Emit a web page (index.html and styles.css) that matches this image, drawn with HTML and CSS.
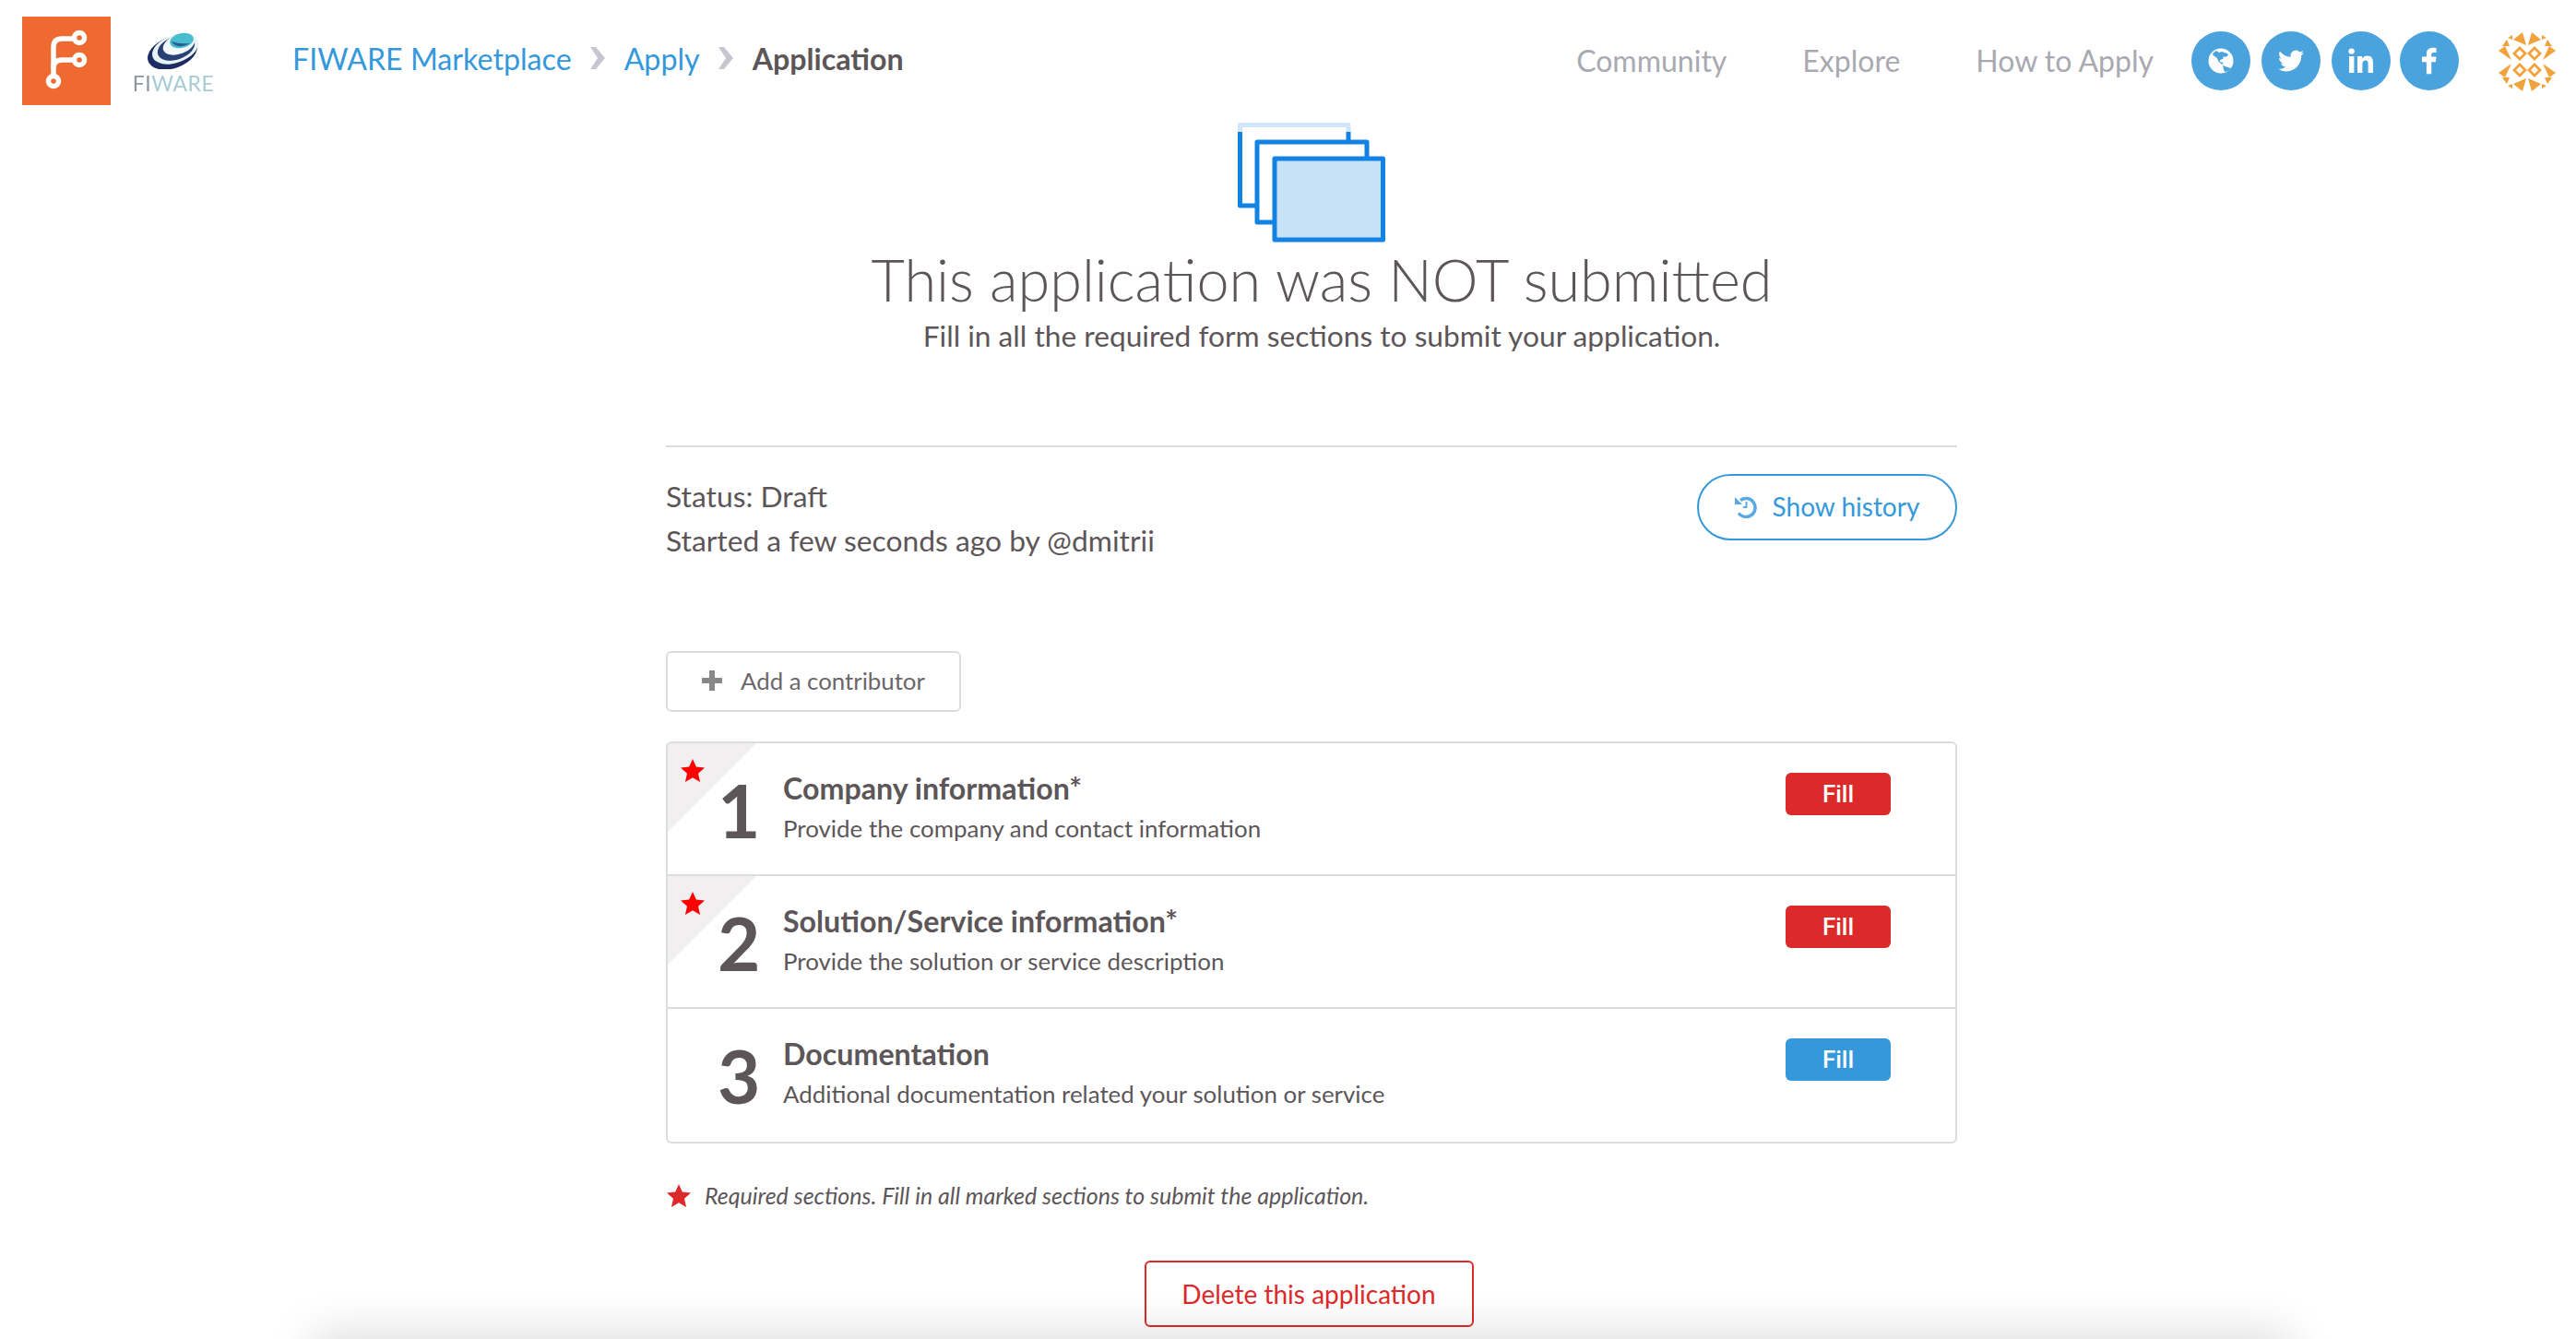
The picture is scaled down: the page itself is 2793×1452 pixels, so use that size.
FILE: index.html
```html
<!DOCTYPE html>
<html lang="en">
<head>
    <meta charset="UTF-8">
    <title>Application</title>
    <link rel="stylesheet" href="styles.css">
</head>
<body>
<header class="topbar">
    <div class="brand">
        <div class="brand-mark">
            <svg viewBox="0 0 96 96" width="96" height="96" fill="none" stroke="#fff" stroke-width="5.500">
                <path d="M34 63V33q0-9 9-9h13"/>
                <path d="M34 56q0-9 9-9h13"/>
                <circle cx="62" cy="23" r="5.500"/>
                <circle cx="62" cy="47" r="5.500"/>
                <circle cx="34" cy="70" r="5.500"/>
            </svg>
        </div>
        <div class="brand-logo">
            <svg viewBox="0 0 58 42" width="58" height="42">
                <ellipse cx="28" cy="24" rx="28" ry="17" fill="#1d2c62" transform="rotate(-20 28 24)"/>
                <ellipse cx="31" cy="20" rx="26" ry="15" fill="#e8f3f6" transform="rotate(-20 31 20)"/>
                <ellipse cx="32" cy="19" rx="21" ry="12.500" fill="#2a3f74" transform="rotate(-20 32 19)"/>
                <ellipse cx="35" cy="15" rx="18" ry="10.500" fill="#f4f9fa" transform="rotate(-20 35 15)"/>
                <ellipse cx="38" cy="11" rx="13" ry="8" fill="#49bdd0" transform="rotate(-12 38 11)"/>
                <path d="M27 12q8 3 20 2-6 4-13 3-5-1-7-5z" fill="#2a5d8f"/>
            </svg>
            <span class="brand-name">FI<i>WARE</i></span>
        </div>
    </div>
    <nav class="crumbs">
        <a href="#">FIWARE Marketplace</a>
        <svg class="crumb-sep" viewBox="0 0 16 24" width="16" height="24"><path d="M0 0h6l10 12L6 24H0l8-12z"/></svg>
        <a href="#">Apply</a>
        <svg class="crumb-sep" viewBox="0 0 16 24" width="16" height="24"><path d="M0 0h6l10 12L6 24H0l8-12z"/></svg>
        <span class="crumb-current">Application</span>
    </nav>
    <nav class="menu">
        <a href="#">Community</a>
        <a href="#">Explore</a>
        <a href="#">How to Apply</a>
    </nav>
    <div class="socials">
        <a class="social" href="#">
            <svg viewBox="0 0 28 28" width="28" height="28">
                <circle cx="14" cy="14" r="13.500" fill="#fff"/>
                <path d="M5 6l4-3 3 2 3-1 3 1 3 1 1 2-3 2-2-1-1 3-3 1 0 2 3 1 1 2-3-1-3-3-1-3-3-2-2-2z" fill="#4ba3de"/>
                <path d="M16 19l3 1 2 1 4 1-3 3-4 1-1-3z" fill="#4ba3de"/>
            </svg>
        </a>
        <a class="social" href="#">
            <svg viewBox="0 0 24 24" width="28" height="28" fill="#fff"><path d="M23.953 4.57a10 10 0 01-2.825.775 4.958 4.958 0 002.163-2.723c-.951.555-2.005.959-3.127 1.184a4.92 4.92 0 00-8.384 4.482C7.69 8.095 4.067 6.13 1.64 3.162a4.822 4.822 0 00-.666 2.475c0 1.71.87 3.213 2.188 4.096a4.904 4.904 0 01-2.228-.616v.06a4.923 4.923 0 003.946 4.827 4.996 4.996 0 01-2.212.085 4.936 4.936 0 004.604 3.417 9.867 9.867 0 01-6.102 2.105c-.39 0-.779-.023-1.17-.067a13.995 13.995 0 007.557 2.209c9.053 0 13.998-7.496 13.998-13.985 0-.21 0-.42-.015-.63A9.935 9.935 0 0024 4.59z"/></svg>
        </a>
        <a class="social" href="#">
            <svg viewBox="0 0 28 28" width="28" height="28" fill="#fff">
                <circle cx="3.600" cy="3.600" r="3.200"/>
                <rect x="1" y="9" width="5.400" height="18"/>
                <path d="M10 9h5.200v2.500c1-1.800 3-3 5.400-3 5 0 6.400 3.200 6.400 7.800V27h-5.400v-9.600c0-2.400-.6-4-2.800-4-2.400 0-3.400 1.800-3.400 4V27H10z"/>
            </svg>
        </a>
        <a class="social" href="#">
            <svg viewBox="0 0 18 32" width="16" height="30" fill="#fff"><path d="M5.500 32V17.500H0V11h5.500V7.500C5.500 2.500 8.500 0 13 0c2 0 3.800.2 4.500.3v5.500h-3c-2.500 0-3 1.200-3 3V11h6l-.8 6.500H11.500V32z"/></svg>
        </a>
    </div>
    <svg class="avatar" viewBox="0 0 62 64" width="62" height="64" fill="#f0a23c">
        <defs>
            <g id="quad">
                <path d="M16 8l10-8 4 14z"/>
                <path d="M10 6l5-3v5z"/>
                <path d="M4 15l5-7 3 7z"/>
                <path d="M0 20l7-5 7 15z"/>
                <path d="M23 15l8 8-8 8-8-8zM23 19l-4 4 4 4 4-4z" fill-rule="evenodd"/>
            </g>
        </defs>
        <use href="#quad"/>
        <use href="#quad" transform="matrix(-1 0 0 1 62 0)"/>
        <use href="#quad" transform="matrix(1 0 0 -1 0 64)"/>
        <use href="#quad" transform="matrix(-1 0 0 -1 62 64)"/>
    </svg>
</header>

<main class="page">
    <section class="hero">
        <svg class="hero-icon" viewBox="0 0 160 130" width="160" height="130" fill="none" stroke="#1282e3" stroke-width="5" stroke-linejoin="round">
            <path d="M2.500 10V90H20M120 10v10"/>
            <path d="M2.500 10V2.500H120V10" stroke="#d2e6f9"/>
            <path d="M39 108H21V21H140V38"/>
            <rect x="40" y="39" width="117.500" height="88" fill="#c7e2f7"/>
        </svg>
        <h1 class="hero-title">This application was NOT submitted</h1>
        <p class="hero-sub">Fill in all the required form sections to submit your application.</p>
    </section>

    <section class="status">
        <div class="status-text">
            <p>Status: Draft</p>
            <p>Started a few seconds ago by @dmitrii</p>
        </div>
        <button class="btn-history">
            <svg viewBox="0 0 26 26" width="26" height="26" fill="none" stroke="#5aaae2" stroke-width="3.500">
                <path d="M6 6.500a10 10 0 1 1-2 14"/>
                <path d="M0 3v8h8z" fill="#5aaae2" stroke="none"/>
                <path d="M12.500 8v6H9" stroke-width="2"/>
            </svg>
            Show history
        </button>
    </section>

    <button class="btn-add">
        <svg viewBox="0 0 22 22" width="22" height="22" fill="#888"><path d="M8 0h6v8h8v6h-8v8H8v-8H0V8h8z"/></svg>
        Add a contributor
    </button>

    <ul class="steps">
        <li class="step step-required">
            <svg class="step-star" viewBox="0 0 26 25" width="26" height="25"><path d="M13 0l3.800 8.600 9.200.9-7 6.200 2.100 9.300L13 20.200 4.900 25 7 15.700 0 9.500l9.200-.9z"/></svg>
            <span class="step-num">1</span>
            <div class="step-body">
                <h3>Company information*</h3>
                <p>Provide the company and contact information</p>
            </div>
            <button class="btn-fill btn-fill-red">Fill</button>
        </li>
        <li class="step step-required">
            <svg class="step-star" viewBox="0 0 26 25" width="26" height="25"><path d="M13 0l3.800 8.600 9.200.9-7 6.200 2.100 9.300L13 20.200 4.900 25 7 15.700 0 9.500l9.200-.9z"/></svg>
            <span class="step-num">2</span>
            <div class="step-body">
                <h3>Solution/Service information*</h3>
                <p>Provide the solution or service description</p>
            </div>
            <button class="btn-fill btn-fill-red">Fill</button>
        </li>
        <li class="step">
            <span class="step-num">3</span>
            <div class="step-body">
                <h3>Documentation</h3>
                <p>Additional documentation related your solution or service</p>
            </div>
            <button class="btn-fill">Fill</button>
        </li>
    </ul>

    <p class="note">
        <svg viewBox="0 0 26 25" width="26" height="25"><path d="M13 0l3.800 8.600 9.200.9-7 6.200 2.100 9.300L13 20.200 4.900 25 7 15.700 0 9.500l9.200-.9z"/></svg>
        <em>Required sections. Fill in all marked sections to submit the application.</em>
    </p>

    <div class="actions">
        <button class="btn-delete">Delete this application</button>
    </div>
</main>

<div class="bottom-shade"></div>
</body>
</html>
```

FILE: styles.css
```css
* {
    margin: 0;
    padding: 0;
    box-sizing: border-box;
}

html, body {
    height: 100%;
    overflow: hidden;
}

body {
    position: relative;
    background: #fff;
    color: #5c5659;
    font-family: Lato, "Open Sans", sans-serif;
}

a {
    color: inherit;
    text-decoration: none;
}

ul, li {
    list-style: none;
}

button {
    background: #fff;
    font-family: inherit;
    cursor: pointer;
}

/* top bar */
.topbar {
    display: flex;
    align-items: flex-start;
    height: 120px;
    padding: 18px 22px 0 24px;
}

.brand {
    display: flex;
    width: 293px;
}

.brand-mark {
    width: 96px;
    height: 96px;
    background: #ef6a30;
}

.brand-logo {
    display: flex;
    flex-direction: column;
    align-items: center;
    width: 82px;
    margin: 15px 0 0 27px;
    filter: blur(0.5px);
}

.brand-name {
    margin-top: 5px;
    color: #8b98a2;
    font-size: 23px;
    line-height: 20px;
    letter-spacing: 0.5px;
}

.brand-name i {
    color: #a6cdd5;
    font-style: normal;
}

.crumbs {
    display: flex;
    align-items: center;
    gap: 20.5px;
    height: 48px;
    margin-top: 21px;
    color: #3498db;
    font-size: 32.2px;
}

.crumb-sep {
    fill: #c6c6d0;
}

.crumb-current {
    color: #5c5659;
    font-weight: 700;
}

.menu {
    display: flex;
    gap: 82px;
    margin: 24px 0 0 auto;
    color: #a9a9b2;
    font-size: 32px;
    line-height: 48px;
}

.socials {
    display: flex;
    gap: 12px;
    margin: 16px 0 0 41px;
}

.social {
    display: flex;
    align-items: center;
    justify-content: center;
    width: 64px;
    height: 64px;
    border-radius: 50%;
    background: #4ba3de;
}

.social:last-child {
    margin-left: -2px;
}

.avatar {
    margin: 17px 0 0 43px;
}

/* content */
.page {
    width: 1400px;
    margin-left: 722px;
}

.hero {
    display: flex;
    flex-direction: column;
    align-items: center;
    height: 363px;
}

.hero-icon {
    margin-top: 13px;
}

.hero-title {
    margin: 0 0 0 22px;
    color: #5c5659;
    font-size: 63px;
    font-weight: 300;
    line-height: 80px;
    white-space: nowrap;
}

.hero-sub {
    margin: -3px 0 0 22px;
    font-size: 31.7px;
    line-height: 48px;
    white-space: nowrap;
}

.status {
    display: flex;
    justify-content: space-between;
    height: 223px;
    padding-top: 29px;
    border-top: 2px solid #ddd;
}

.status-text {
    font-size: 31.8px;
    line-height: 48px;
}

.btn-history {
    display: flex;
    align-items: center;
    justify-content: center;
    gap: 15px;
    width: 282px;
    height: 72px;
    padding-bottom: 2px;
    border: 2px solid #3498db;
    border-radius: 36px;
    color: #3498db;
    font-size: 28px;
}

.btn-add {
    display: flex;
    align-items: center;
    gap: 20px;
    width: 320px;
    height: 66px;
    padding: 0 0 2px 37px;
    border: 2px solid #ddd;
    border-radius: 6px;
    color: #6b6669;
    font-size: 25.8px;
}

/* step list */
.steps {
    margin-top: 32px;
    border: 2px solid #ddd;
    border-radius: 6px;
    overflow: hidden;
}

.step {
    position: relative;
    display: flex;
    align-items: flex-start;
    height: 144px;
    padding: 31px 70px 0 0;
    border-bottom: 2px solid #ddd;
}

.step:last-child {
    border-bottom: none;
}

.step-required::before {
    content: "";
    position: absolute;
    left: 0;
    top: 0;
    border-style: solid;
    border-width: 96px 96px 0 0;
    border-color: #f1eff0 transparent transparent transparent;
}

.step-star {
    position: absolute;
    left: 14px;
    top: 17px;
    fill: #fe0000;
}

.step-num {
    position: relative;
    width: 125px;
    padding: 1px 0 0 54px;
    color: #5c5659;
    font-size: 80px;
    font-weight: 700;
    line-height: 80px;
}

.step-body {
    flex: 1;
}

.step-body h3 {
    font-size: 32.2px;
    font-weight: 700;
    line-height: 36px;
}

.step-body p {
    margin-top: 8px;
    font-size: 25.9px;
    line-height: 35px;
}

.btn-fill {
    width: 114px;
    height: 46px;
    margin-top: 1px;
    border: none;
    border-radius: 6px;
    background: #3498db;
    color: #fff;
    font-family: Roboto, sans-serif;
    font-size: 26px;
    font-weight: 500;
}

.btn-fill-red {
    background: #dc2a2a;
}

.note {
    display: flex;
    align-items: center;
    gap: 15px;
    margin-top: 38px;
    padding-left: 1px;
    font-size: 25px;
    line-height: 36px;
}

.note svg {
    fill: #dc2a2a;
}

.actions {
    display: flex;
    justify-content: center;
    margin-top: 53px;
}

.btn-delete {
    width: 357px;
    height: 72px;
    margin-left: -6px;
    border: 2px solid #dc2a2a;
    border-radius: 6px;
    color: #dc2a2a;
    font-size: 28px;
}

/* footer peeking in at the bottom edge */
.bottom-shade {
    position: absolute;
    left: 340px;
    right: 310px;
    bottom: -60px;
    height: 60px;
    box-shadow: 0 -6px 50px rgba(0, 0, 0, 0.14);
}
```
